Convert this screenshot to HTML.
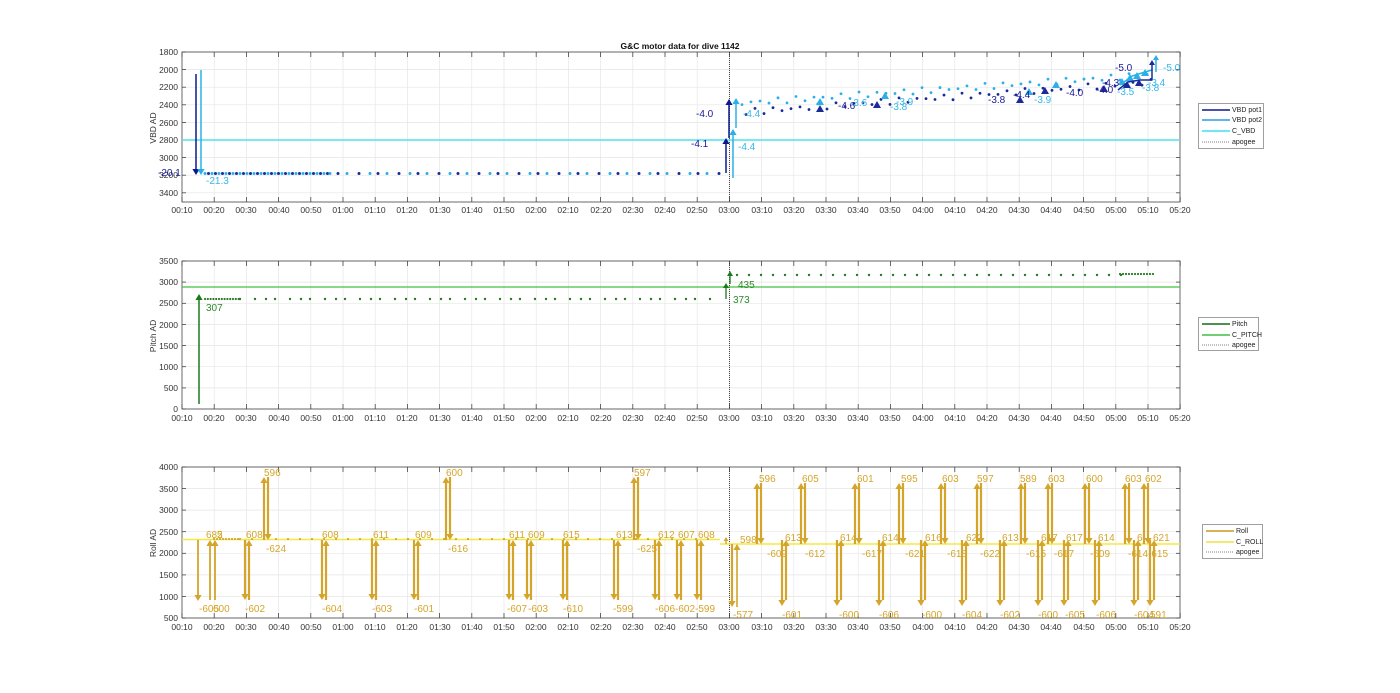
<!DOCTYPE html>
<html><head><meta charset="utf-8"><style>
html,body{margin:0;padding:0;background:#fff;}
svg{display:block;font-family:"Liberation Sans",sans-serif;}
.t{font-size:8.5px;fill:#333;}
.ya{font-size:8.5px;fill:#333;text-anchor:end;}
.xa{font-size:8.5px;fill:#333;text-anchor:middle;}
.lg{font-size:7px;fill:#222;}
.v1{font-size:10px;fill:#1a1a9a;}
.v2{font-size:10px;fill:#35b8e8;}
.g{font-size:10px;fill:#2a8a2a;}
.r{font-size:10px;fill:#d4a52a;}
</style></head><body>
<svg id="s" width="1400" height="693" xmlns="http://www.w3.org/2000/svg">
<g id="grid"></g>
<g id="data"></g>
<text x="680" y="49" text-anchor="middle" style="font-size:8.5px;font-weight:bold;fill:#111">G&amp;C motor data for dive 1142</text>
<g class="ya"><text x="178" y="55">1800</text><text x="178" y="73">2000</text><text x="178" y="90">2200</text><text x="178" y="108">2400</text><text x="178" y="126">2600</text><text x="178" y="143">2800</text><text x="178" y="161">3000</text><text x="178" y="178">3200</text><text x="178" y="196">3400</text></g>
<text transform="translate(156,128) rotate(-90)" text-anchor="middle" class="t">VBD AD</text>
<g class="ya"><text x="178" y="264">3500</text><text x="178" y="285">3000</text><text x="178" y="306">2500</text><text x="178" y="328">2000</text><text x="178" y="349">1500</text><text x="178" y="370">1000</text><text x="178" y="391">500</text><text x="178" y="412">0</text></g>
<text transform="translate(156,336) rotate(-90)" text-anchor="middle" class="t">Pitch AD</text>
<g class="ya"><text x="178" y="470">4000</text><text x="178" y="492">3500</text><text x="178" y="513">3000</text><text x="178" y="535">2500</text><text x="178" y="556">2000</text><text x="178" y="578">1500</text><text x="178" y="600">1000</text><text x="178" y="621">500</text></g>
<text transform="translate(156,543) rotate(-90)" text-anchor="middle" class="t">Roll AD</text>
<g class="xa"><text x="182" y="213">00:10</text><text x="214" y="213">00:20</text><text x="246" y="213">00:30</text><text x="279" y="213">00:40</text><text x="311" y="213">00:50</text><text x="343" y="213">01:00</text><text x="375" y="213">01:10</text><text x="407" y="213">01:20</text><text x="440" y="213">01:30</text><text x="472" y="213">01:40</text><text x="504" y="213">01:50</text><text x="536" y="213">02:00</text><text x="568" y="213">02:10</text><text x="601" y="213">02:20</text><text x="633" y="213">02:30</text><text x="665" y="213">02:40</text><text x="697" y="213">02:50</text><text x="729" y="213">03:00</text><text x="762" y="213">03:10</text><text x="794" y="213">03:20</text><text x="826" y="213">03:30</text><text x="858" y="213">03:40</text><text x="890" y="213">03:50</text><text x="923" y="213">04:00</text><text x="955" y="213">04:10</text><text x="987" y="213">04:20</text><text x="1019" y="213">04:30</text><text x="1051" y="213">04:40</text><text x="1084" y="213">04:50</text><text x="1116" y="213">05:00</text><text x="1148" y="213">05:10</text><text x="1180" y="213">05:20</text></g>
<g class="xa"><text x="182" y="421">00:10</text><text x="214" y="421">00:20</text><text x="246" y="421">00:30</text><text x="279" y="421">00:40</text><text x="311" y="421">00:50</text><text x="343" y="421">01:00</text><text x="375" y="421">01:10</text><text x="407" y="421">01:20</text><text x="440" y="421">01:30</text><text x="472" y="421">01:40</text><text x="504" y="421">01:50</text><text x="536" y="421">02:00</text><text x="568" y="421">02:10</text><text x="601" y="421">02:20</text><text x="633" y="421">02:30</text><text x="665" y="421">02:40</text><text x="697" y="421">02:50</text><text x="729" y="421">03:00</text><text x="762" y="421">03:10</text><text x="794" y="421">03:20</text><text x="826" y="421">03:30</text><text x="858" y="421">03:40</text><text x="890" y="421">03:50</text><text x="923" y="421">04:00</text><text x="955" y="421">04:10</text><text x="987" y="421">04:20</text><text x="1019" y="421">04:30</text><text x="1051" y="421">04:40</text><text x="1084" y="421">04:50</text><text x="1116" y="421">05:00</text><text x="1148" y="421">05:10</text><text x="1180" y="421">05:20</text></g>
<g class="xa"><text x="182" y="630">00:10</text><text x="214" y="630">00:20</text><text x="246" y="630">00:30</text><text x="279" y="630">00:40</text><text x="311" y="630">00:50</text><text x="343" y="630">01:00</text><text x="375" y="630">01:10</text><text x="407" y="630">01:20</text><text x="440" y="630">01:30</text><text x="472" y="630">01:40</text><text x="504" y="630">01:50</text><text x="536" y="630">02:00</text><text x="568" y="630">02:10</text><text x="601" y="630">02:20</text><text x="633" y="630">02:30</text><text x="665" y="630">02:40</text><text x="697" y="630">02:50</text><text x="729" y="630">03:00</text><text x="762" y="630">03:10</text><text x="794" y="630">03:20</text><text x="826" y="630">03:30</text><text x="858" y="630">03:40</text><text x="890" y="630">03:50</text><text x="923" y="630">04:00</text><text x="955" y="630">04:10</text><text x="987" y="630">04:20</text><text x="1019" y="630">04:30</text><text x="1051" y="630">04:40</text><text x="1084" y="630">04:50</text><text x="1116" y="630">05:00</text><text x="1148" y="630">05:10</text><text x="1180" y="630">05:20</text></g>
<text x="158" y="176" class="v1">-20.1</text><text x="206" y="184" class="v2">-21.3</text>
<text x="696" y="117" class="v1">-4.0</text><text x="691" y="147" class="v1">-4.1</text>
<text x="738" y="150" class="v2">-4.4</text><text x="743" y="117" class="v2">-4.4</text>
<text x="838" y="109" class="v1">-4.6</text><text x="850" y="106" class="v2">-3.6</text><text x="890" y="110" class="v2">-3.8</text><text x="896" y="105" class="v2">-3.9</text>
<text x="988" y="103" class="v1">-3.8</text><text x="1013" y="98" class="v1">-4.4</text><text x="1034" y="103" class="v2">-3.9</text><text x="1066" y="96" class="v1">-4.0</text><text x="1096" y="93" class="v1">-4.0</text><text x="1102" y="86" class="v1">-4.3</text><text x="1117" y="95" class="v2">-3.5</text><text x="1142" y="91" class="v2">-3.8</text><text x="1148" y="86" class="v2">-3.4</text>
<text x="1115" y="71" class="v1">-5.0</text><text x="1163" y="71" class="v2">-5.0</text>
<text x="206" y="311" class="g">307</text><text x="738" y="288" class="g">435</text><text x="733" y="303" class="g">373</text>
<g class="r">
<text x="206" y="538">682</text><text x="217" y="538">5</text><text x="246" y="538">608</text><text x="264" y="476">596</text><text x="266" y="552">-624</text><text x="322" y="538">608</text><text x="373" y="538">611</text><text x="415" y="538">609</text><text x="446" y="476">600</text><text x="448" y="552">-616</text><text x="509" y="538">611</text><text x="528" y="538">609</text><text x="563" y="538">615</text><text x="616" y="538">613</text><text x="634" y="476">597</text><text x="637" y="552">-625</text><text x="658" y="538">612</text><text x="678" y="538">607</text><text x="698" y="538">608</text>
<text x="199" y="612">-605</text><text x="213" y="612">600</text><text x="245" y="612">-602</text><text x="322" y="612">-604</text><text x="372" y="612">-603</text><text x="414" y="612">-601</text><text x="507" y="612">-607</text><text x="528" y="612">-603</text><text x="563" y="612">-610</text><text x="613" y="612">-599</text><text x="655" y="612">-606</text><text x="675" y="612">-602</text><text x="695" y="612">-599</text>
<text x="740" y="543">598</text><text x="759" y="482">596</text><text x="767" y="557">-609</text><text x="785" y="541">613</text><text x="802" y="482">605</text><text x="805" y="557">-612</text><text x="840" y="541">614</text><text x="857" y="482">601</text><text x="862" y="557">-617</text><text x="882" y="541">614</text><text x="901" y="482">595</text><text x="905" y="557">-621</text><text x="925" y="541">616</text><text x="942" y="482">603</text><text x="947" y="557">-618</text><text x="966" y="541">622</text><text x="977" y="482">597</text><text x="980" y="557">-622</text><text x="1002" y="541">613</text><text x="1020" y="482">589</text><text x="1026" y="557">-615</text><text x="1041" y="541">617</text><text x="1048" y="482">603</text><text x="1054" y="557">-617</text><text x="1066" y="541">617</text><text x="1086" y="482">600</text><text x="1090" y="557">-609</text><text x="1098" y="541">614</text><text x="1125" y="482">603</text><text x="1145" y="482">602</text><text x="1128" y="557">-614</text><text x="1137" y="541">6</text><text x="1153" y="541">621</text><text x="1148" y="557">-615</text>
<text x="733" y="618">-577</text><text x="782" y="618">-601</text><text x="839" y="618">-600</text><text x="879" y="618">-606</text><text x="922" y="618">-600</text><text x="962" y="618">-604</text><text x="1000" y="618">-602</text><text x="1038" y="618">-600</text><text x="1065" y="618">-605</text><text x="1096" y="618">-606</text><text x="1134" y="618">-604</text><text x="1150" y="618">591</text>
</g>
<g>
<rect x="1198.5" y="103.5" width="65" height="45" fill="#fff" stroke="#888" stroke-width="0.8"/>
<line x1="1202" y1="110" x2="1230" y2="110" stroke="#0a1a8c" stroke-width="1.5"/><text x="1232" y="112" class="lg">VBD pot1</text>
<line x1="1202" y1="120" x2="1230" y2="120" stroke="#2a9ee0" stroke-width="1.5"/><text x="1232" y="122" class="lg">VBD pot2</text>
<line x1="1202" y1="131" x2="1230" y2="131" stroke="#40e0f0" stroke-width="1.5"/><text x="1232" y="133" class="lg">C_VBD</text>
<line x1="1202" y1="142" x2="1230" y2="142" stroke="#555" stroke-width="0.8" stroke-dasharray="1,1"/><text x="1232" y="144" class="lg">apogee</text>
<rect x="1198.5" y="317.5" width="60" height="33" fill="#fff" stroke="#888" stroke-width="0.8"/>
<line x1="1202" y1="324" x2="1230" y2="324" stroke="#1a6a1a" stroke-width="1.5"/><text x="1232" y="326" class="lg">Pitch</text>
<line x1="1202" y1="335" x2="1230" y2="335" stroke="#40c040" stroke-width="1.5"/><text x="1232" y="337" class="lg">C_PITCH</text>
<line x1="1202" y1="345" x2="1230" y2="345" stroke="#555" stroke-width="0.8" stroke-dasharray="1,1"/><text x="1232" y="347" class="lg">apogee</text>
<rect x="1202.5" y="524.5" width="60" height="34" fill="#fff" stroke="#888" stroke-width="0.8"/>
<line x1="1206" y1="531" x2="1234" y2="531" stroke="#c89a20" stroke-width="1.5"/><text x="1236" y="533" class="lg">Roll</text>
<line x1="1206" y1="542" x2="1234" y2="542" stroke="#f0e040" stroke-width="1.5"/><text x="1236" y="544" class="lg">C_ROLL</text>
<line x1="1206" y1="552" x2="1234" y2="552" stroke="#555" stroke-width="0.8" stroke-dasharray="1,1"/><text x="1236" y="554" class="lg">apogee</text>
</g>
</svg>
<script>
(function(){
var NS="http://www.w3.org/2000/svg",G=document.getElementById("grid"),D=document.getElementById("data");
function el(p,tag,a){var e=document.createElementNS(NS,tag);for(var k in a)e.setAttribute(k,a[k]);p.appendChild(e);return e;}
function X(i){return 182+i*32.2;}
var axes=[[52,202,[52,69.6,87.2,104.8,122.4,140,157.6,175.2,192.8]],[261,409,[261,282.1,303.3,324.4,345.6,366.7,387.9,409]],[467,618,[467,488.6,510.1,531.7,553.3,574.9,596.4,618]]];
axes.forEach(function(a){
 el(G,"rect",{x:182,y:a[0],width:998,height:a[1]-a[0],fill:"#fff"});
 for(var i=1;i<31;i++)el(G,"line",{x1:X(i),y1:a[0],x2:X(i),y2:a[1],stroke:"#e6e6e6","stroke-width":0.7});
 a[2].forEach(function(y){el(G,"line",{x1:182,y1:y,x2:1180,y2:y,stroke:"#e6e6e6","stroke-width":0.7});});
 for(var i=0;i<32;i++){el(G,"line",{x1:X(i),y1:a[1],x2:X(i),y2:a[1]-5,stroke:"#444","stroke-width":0.8});el(G,"line",{x1:X(i),y1:a[0],x2:X(i),y2:a[0]+5,stroke:"#444","stroke-width":0.8});}
 a[2].forEach(function(y){el(G,"line",{x1:182,y1:y,x2:186,y2:y,stroke:"#444","stroke-width":0.8});el(G,"line",{x1:1180,y1:y,x2:1176,y2:y,stroke:"#444","stroke-width":0.8});});
 el(G,"rect",{x:182,y:a[0],width:998,height:a[1]-a[0],fill:"none",stroke:"#444","stroke-width":0.8});
 el(D,"line",{x1:729.5,y1:a[0],x2:729.5,y2:a[1],stroke:"#333","stroke-width":0.9,"stroke-dasharray":"1,1"});
});
function dot(x,y,c,r){el(D,"circle",{cx:x,cy:y,r:r||1.3,fill:c});}
function arrow(x,y1,y2,c,w,h){el(D,"line",{x1:x,y1:y1,x2:x,y2:y2+(y2>y1?-h:h),stroke:c,"stroke-width":w});var d=y2>y1?-1:1;el(D,"polygon",{points:(x-h*0.6)+","+(y2+d*h)+" "+(x+h*0.6)+","+(y2+d*h)+" "+x+","+y2,fill:c});}
el(D,"line",{x1:182,y1:140,x2:1180,y2:140,stroke:"#50e0ee","stroke-width":1.5});
var xs=[];for(var x=205;x<330;x+=3.5)xs.push(x);for(var x=330;x<720;x+=8+((x*7)%5))xs.push(x);
xs.forEach(function(x,i){dot(x,173.5,i%2?"#1a2a9a":"#2ab0e8",1.5);});
arrow(196,74,175,"#0a1a8c",1.5,6);arrow(201,70,175,"#2ab0e8",1.5,6);
arrow(726,173,138,"#0a1a8c",1.5,6);arrow(729,138,99,"#0a1a8c",1.5,6);
arrow(733,178,129,"#2ab0e8",1.5,6);arrow(736,128,98,"#2ab0e8",1.5,6);
for(var x=742;x<1150;x+=9){var t=(x-742)/408;var y1=103-t*28+Math.sin(x)*3,y2=112-t*30+Math.cos(x)*3;dot(x,y1,"#2ab0e8",1.4);dot(x+4,y2,"#1a2a9a",1.4);}
[[820,102,"#2ab0e8"],[820,109,"#1a2a9a"],[877,105,"#1a2a9a"],[885,96,"#2ab0e8"],[1020,100,"#1a2a9a"],[1029,92,"#2ab0e8"],[1045,91,"#1a2a9a"],[1056,85,"#2ab0e8"],[1104,89,"#1a2a9a"],[1122,82,"#2ab0e8"],[1130,78,"#2ab0e8"],[1137,76,"#2ab0e8"],[1145,73,"#2ab0e8"],[1127,85,"#1a2a9a"],[1139,83,"#1a2a9a"]].forEach(function(p){el(D,"polygon",{points:(p[0]-4)+","+(p[1]+3)+" "+(p[0]+4)+","+(p[1]+3)+" "+p[0]+","+(p[1]-4),fill:p[2]});});
el(D,"polyline",{points:"1118,90 1128,82 1140,80 1152,80",fill:"none",stroke:"#1a2a9a","stroke-width":1.5});
el(D,"polyline",{points:"1120,85 1132,76 1145,72 1152,70",fill:"none",stroke:"#2ab0e8","stroke-width":1.5});
arrow(1152,80,60,"#1a2a9a",1.5,5);arrow(1156,72,55,"#2ab0e8",1.5,5);
el(D,"line",{x1:182,y1:287,x2:1180,y2:287,stroke:"#40c040","stroke-width":1.2});
arrow(199,404,294,"#1a7a1a",1.5,6);
for(var x=205;x<240;x+=2.8)dot(x,299,"#2a7a2a",1.1);
for(var x=240;x<720;x+=9+((x*3)%7))dot(x,299,"#2a7a2a",1.2);
arrow(726,299,283,"#1a7a1a",1.3,5);arrow(730,284,271,"#1a7a1a",1.3,5);
for(var x=737;x<1130;x+=11+((x*5)%6))dot(x,275,"#2a7a2a",1.2);
for(var x=1120;x<1155;x+=3)dot(x,274,"#2a7a2a",1.1);
el(D,"line",{x1:182,y1:539.5,x2:720,y2:539.5,stroke:"#f5e840","stroke-width":1.5});
el(D,"line",{x1:720,y1:544,x2:1180,y2:544,stroke:"#f5e840","stroke-width":1.5});
for(var x=214;x<240;x+=3)dot(x,539,"#c89a20",1);
for(var x=240;x<720;x+=12)dot(x,539,"#c89a20",1);
var RC="#d4a52a",W=2.2,H=6;
function pd(x,yb){arrow(x,540,yb||600,RC,W,H);arrow(x+4,600,540,RC,W,H);}
function pu(x){arrow(x,540,477,RC,W,H);arrow(x+4,477,540,RC,W,H);}
var base=[199,211,216,245,322,372,414,509,527,563,614,655,677,697];
arrow(198,540,601,RC,1.8,H);arrow(210,600,540,RC,1.8,H);arrow(215,600,540,RC,1.8,H);
base.slice(3).forEach(function(x){pd(x);});
[264,446,634].forEach(function(x){pu(x);});
arrow(732,544,607,RC,W,H);arrow(737,607,544,RC,1.6,H);arrow(726,544,537,RC,1.4,4);
[782,837,879,921,962,1000,1038,1064,1095,1134,1150].forEach(function(x){pd(x,606);});
[757,801,855,899,941,977,1021,1048,1085,1125,1144].forEach(function(x){arrow(x,544,483,RC,W,H);arrow(x+4,483,544,RC,W,H);});
})();
</script>
</body></html>
